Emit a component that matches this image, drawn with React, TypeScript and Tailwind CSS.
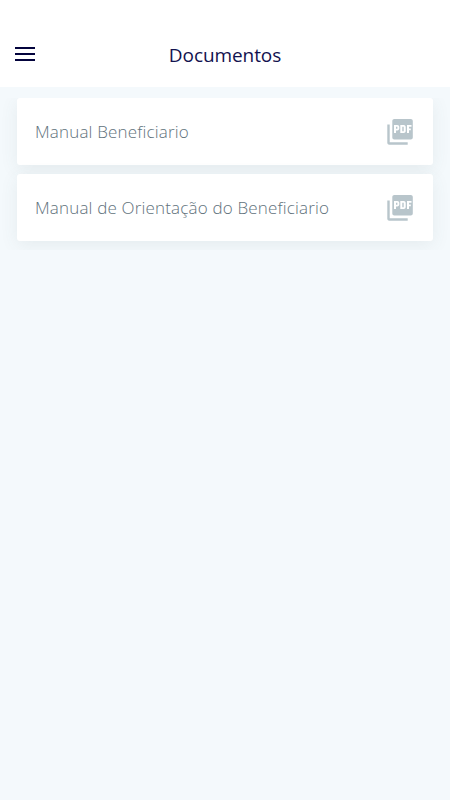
const documents = ["Manual Beneficiario", "Manual de Orientação do Beneficiario"];

function PdfIcon() {
  return (
    <svg width="26" height="26" viewBox="0 0 26 26" fill="#b8c5cb" aria-hidden="true">
      <path d="M0.300 5.500H2.700V23.200H20.700V25.700H2.300C1.200 25.700 .300 24.800 .300 23.700Z" />
      <path fillRule="evenodd" d="M7.300 0H23.800C24.900 0 25.800 .900 25.800 2V18.500C25.800 19.600 24.900 20.500 23.800 20.500H7.300C6.200 20.500 5.300 19.600 5.300 18.500V2C5.300 .900 6.200 0 7.300 0ZM7 6V14H9V11.500H10.300C11.500 11.500 12.300 10.700 12.300 9.600V7.900C12.300 6.800 11.500 6 10.300 6ZM9 7.800H10.400V9.800H9ZM13.300 6V14H16.700C17.900 14 18.700 13.200 18.700 12V8C18.700 6.800 17.900 6 16.700 6ZM15.300 7.800H16.700V12.200H15.300ZM20 6V14H22V11.200H23.800V9.400H22V7.800H24.500V6Z" />
    </svg>
  );
}

export default function App() {
  return (
    <div className="h-[800px] w-full bg-[#f4f9fc] font-['Open_Sans','Noto_Sans',sans-serif]">
      <header className="grid h-[87px] grid-cols-[50px_1fr_50px] items-center bg-white pt-[22px]">
        <button className="-mt-px ml-[14.500px] flex w-5 flex-col gap-1" aria-label="Menu">
          <span className="h-0.5 w-5 bg-[#03033c]" />
          <span className="h-0.5 w-5 bg-[#03033c]" />
          <span className="h-0.5 w-5 bg-[#03033c]" />
        </button>
        <h1 className="text-center text-[19px] leading-6 font-normal tracking-[-0.08px] text-[#12124f]">Documentos</h1>
      </header>
      <main className="mt-[11px] flex h-[152px] flex-col gap-[9px] overflow-hidden px-[17px]">
        {documents.map((name) => (
          <button
            key={name}
            className="flex h-[67px] shrink-0 items-center justify-between rounded-[3px] bg-white pr-5 pl-[18px] shadow-[0_4px_18px_rgba(70,90,95,0.085)]"
          >
            <span className="text-[17px] leading-6 font-light tracking-[0.17px] whitespace-nowrap text-[#5f727c]">{name}</span>
            <PdfIcon />
          </button>
        ))}
      </main>
    </div>
  );
}
